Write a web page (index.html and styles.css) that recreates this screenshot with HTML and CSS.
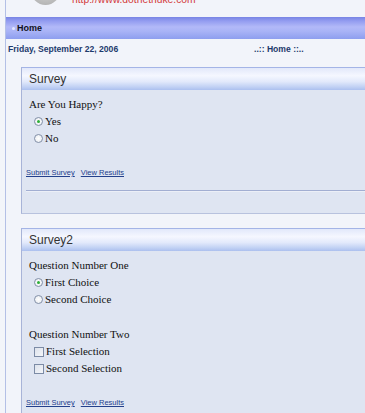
FILE: index.html
```html
<!DOCTYPE html>
<html>
<head>
<meta charset="utf-8">
<title>Survey</title>
<link rel="stylesheet" href="styles.css">
</head>
<body>
<div class="page">
  <header class="top">
    <div class="logo"></div>
    <span class="url">http://www.dotnetnuke.com</span>
  </header>
  <nav class="nav"><span class="bullet"></span><span class="nav-item">Home</span></nav>
  <div class="datebar">
    <span class="date">Friday, September 22, 2006</span>
    <span class="crumb">..:: Home ::..</span>
  </div>

  <section class="module">
    <h2 class="module-title">Survey</h2>
    <div class="module-body">
      <div class="question">
        <div class="q-text">Are You Happy?</div>
        <label class="option"><input class="radio" type="radio" name="q1" checked>Yes</label>
        <label class="option"><input class="radio" type="radio" name="q1">No</label>
      </div>
      <div class="links"><a href="#">Submit Survey</a><a href="#">View Results</a></div>
      <div class="rule"></div>
    </div>
  </section>

  <section class="module">
    <h2 class="module-title">Survey2</h2>
    <div class="module-body">
      <div class="question">
        <div class="q-text">Question Number One</div>
        <label class="option"><input class="radio" type="radio" name="q2" checked>First Choice</label>
        <label class="option"><input class="radio" type="radio" name="q2">Second Choice</label>
      </div>
      <div class="question">
        <div class="q-text">Question Number Two</div>
        <label class="option"><input class="check" type="checkbox">First Selection</label>
        <label class="option"><input class="check" type="checkbox">Second Selection</label>
      </div>
      <div class="links"><a href="#">Submit Survey</a><a href="#">View Results</a></div>
      <div class="rule"></div>
    </div>
  </section>
</div>
</body>
</html>
```

FILE: styles.css
```css
html, body {
  margin: 0;
  padding: 0;
  overflow: hidden;
  background: #f3f5fa;
}

.page {
  margin-left: 5px;
  border-left: 1px solid #b4c0e6;
  background: #f2f4fa;
  min-height: 413px;
  width: 400px;
}

.top {
  height: 17px;
  overflow: hidden;
  display: flex;
  align-items: flex-start;
}

.logo {
  width: 29px;
  height: 29px;
  border-radius: 50%;
  margin-top: -24px;
  margin-left: 25px;
  background: radial-gradient(circle at 50% 30%, #d8d8d8 0%, #c4c4c4 55%, #aaaaaa 100%);
  flex: none;
}

.url {
  font-family: "Liberation Sans", Arial, sans-serif;
  font-size: 10.3px;
  line-height: 12px;
  color: #d23a3a;
  margin-top: -6px;
  margin-left: 12px;
  white-space: nowrap;
}

.nav {
  height: 22px;
  display: flex;
  align-items: center;
  background: linear-gradient(to bottom, #7884e4 0%, #939cf0 18%, #b2b9f8 45%, #a9b3f6 65%, #8e9eef 100%);
}

.bullet {
  width: 3px;
  height: 3px;
  border-radius: 50%;
  background: #e4e8ff;
  margin-left: 6px;
  margin-right: 2px;
}

.nav-item {
  font-family: "Liberation Sans", Arial, sans-serif;
  font-weight: bold;
  font-size: 9px;
  color: #111122;
}

.datebar {
  height: 20px;
  display: grid;
  grid-template-columns: 246px auto;
  align-items: center;
  padding-left: 2px;
  font-family: "Liberation Sans", Arial, sans-serif;
  font-weight: bold;
  font-size: 8.6px;
  color: #1d3a6c;
  white-space: nowrap;
}

.module {
  margin: 8px 0 14px 15px;
  border-left: 1px solid #a8b4d8;
  border-top: 1px solid #a4b4e6;
  border-bottom: 1px solid #b8c2de;
  background: #dfe5f2;
}

.module-title {
  margin: 0;
  height: 22px;
  line-height: 22px;
  padding-left: 7px;
  font-family: "Liberation Sans", Arial, sans-serif;
  font-weight: normal;
  font-size: 12px;
  color: #333;
  background: linear-gradient(to bottom, #e2e8fa 0%, #f5f7ff 35%, #e2e9fb 62%, #c2d2f4 85%, #acc0ef 100%);
}

.module-body {
  padding: 6px 0 21px 4px;
}

.question {
  padding-left: 3px;
  margin-bottom: 18px;
  font-family: "Liberation Serif", "Times New Roman", serif;
  font-size: 11px;
  line-height: 17px;
  color: #111;
}

.option {
  display: flex;
  align-items: center;
  height: 17px;
  padding-left: 5px;
}

.radio {
  appearance: none;
  -webkit-appearance: none;
  width: 9px;
  height: 9px;
  margin: 0 2px 0 0;
  border: 1px solid #8390a8;
  border-radius: 50%;
  background: radial-gradient(circle, #ffffff 0%, #eef0f4 70%, #d8dce6 100%);
  box-sizing: border-box;
  display: grid;
  place-items: center;
}

.radio:checked::after {
  content: "";
  width: 3px;
  height: 3px;
  border-radius: 50%;
  background: #2eae3a;
}

.check {
  appearance: none;
  -webkit-appearance: none;
  width: 10px;
  height: 10px;
  margin: 0 2px 0 0;
  border: 1px solid #7c8ba6;
  background: linear-gradient(135deg, #dde2ec 0%, #f4f6fa 100%);
  box-sizing: border-box;
}

.links {
  display: flex;
  gap: 6px;
  height: 15px;
  align-items: center;
  font-family: "Liberation Sans", Arial, sans-serif;
  font-size: 7.5px;
}

.links a {
  color: #23408c;
  text-decoration: underline;
}

.rule {
  margin-top: 10px;
  border-top: 1px solid #a2aed2;
  border-bottom: 1px solid #eceff7;
}
```
